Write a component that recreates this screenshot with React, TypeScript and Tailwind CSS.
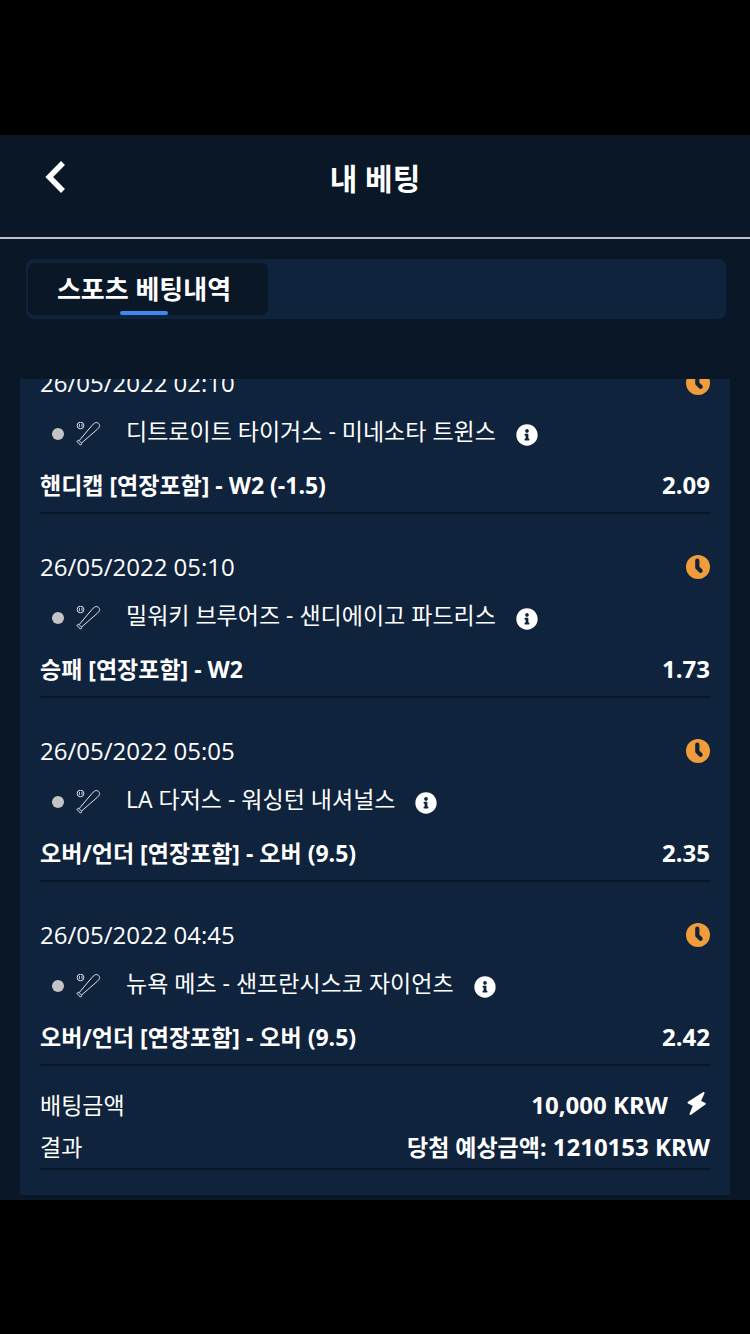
import React from 'react';
import { FaInfoCircle } from 'react-icons/fa';

interface Bet {
  date: string;
  match: string;
  market: string;
  odds: string;
}

const bets: Bet[] = [
  { date: '26/05/2022 02:10', match: '디트로이트 타이거스 - 미네소타 트윈스', market: '핸디캡 [연장포함] - W2 (-1.5)', odds: '2.09' },
  { date: '26/05/2022 05:10', match: '밀워키 브루어즈 - 샌디에이고 파드리스', market: '승패 [연장포함] - W2', odds: '1.73' },
  { date: '26/05/2022 05:05', match: 'LA 다저스 - 워싱턴 내셔널스', market: '오버/언더 [연장포함] - 오버 (9.5)', odds: '2.35' },
  { date: '26/05/2022 04:45', match: '뉴욕 메츠 - 샌프란시스코 자이언츠', market: '오버/언더 [연장포함] - 오버 (9.5)', odds: '2.42' },
];

const ClockIcon = () => (
  <svg className="h-6 w-6" viewBox="0 0 24 24" fill="none" role="img" aria-label="대기중">
    <circle cx="12" cy="12" r="12" fill="#f09c3a" />
    <path d="M11.3 5.500v7l3.300 3.300" stroke="#10233c" strokeWidth="4.2" strokeLinecap="round" strokeLinejoin="round" />
  </svg>
);

const BaseballIcon = () => (
  <svg className="h-6 w-6 text-[#e2e6eb]" viewBox="0 0 24 24" fill="none" stroke="currentColor" aria-hidden="true">
    <circle cx="4.5" cy="3.5" r="3.3" />
    <path d="M3.5 2v3M6 2v3" strokeWidth="0.8" />
    <path d="M3.2 18.6 16.4 3C18.5.6 20.6-.2 22.4 1.300s1.400 3.700-.8 5.700L5.600 21" />
    <path d="m.8 19.300 1.900-1 3.200 3-1.300 1.900z" />
  </svg>
);

const BoltIcon = () => (
  <svg className="h-6 w-6" viewBox="0 0 24 24" fill="currentColor" stroke="currentColor" strokeWidth="2" strokeLinejoin="round" aria-hidden="true">
    <path d="M17.500 2 2.500 11.500 8 14.300 4.500 23 18.800 12.800l-5-2.500z" />
  </svg>
);

const BetItem = ({ bet }: { bet: Bet }) => (
  <li className="shrink-0 border-b-2 border-[#091727] pt-9 pb-2">
    <div className="flex h-[34px] items-center justify-between">
      <time>{bet.date}</time>
      <ClockIcon />
    </div>
    <div className="flex h-[66px] items-center pt-0.5 pl-3">
      <span className="h-3 w-3 rounded-full bg-[#c4c4c6]" />
      <span className="ml-3">
        <BaseballIcon />
      </span>
      <span className="ml-[26px] pb-1.5 text-[23px]">{bet.match}</span>
      <button type="button" aria-label="경기 정보" className="ml-5 pt-0.5">
        <FaInfoCircle className="h-[22px] w-[22px]" />
      </button>
    </div>
    <div className="flex h-[38px] items-center justify-between font-bold">
      <span className="text-[23px]">{bet.market}</span>
      <span>{bet.odds}</span>
    </div>
  </li>
);

export default function App() {
  return (
    <div className="flex h-screen flex-col bg-black pt-[135px] pb-[134px] font-['Open_Sans','Noto_Sans_CJK_KR',sans-serif] text-2xl text-white">
      <div className="flex min-h-0 flex-1 flex-col bg-[#091727]">
        <header className="grid shrink-0 grid-cols-[80px_1fr_80px] border-b-2 border-[#bfc3c6] pt-[22px] pb-9">
          <button type="button" aria-label="뒤로" className="flex items-center pb-1 pl-11">
            <svg className="h-9 w-6" viewBox="0 0 24 36" fill="none" stroke="currentColor" strokeWidth="5.5">
              <path d="M19 4 5.200 18 19 32" />
            </svg>
          </button>
          <h1 className="text-center text-[30px] leading-[44px] font-bold">내 베팅</h1>
        </header>

        <nav className="mt-5 mr-6 mb-[60px] ml-[26px] shrink-0 rounded-lg bg-[#10233c] px-0.5 py-1">
          <button type="button" className="flex h-[52px] w-60 flex-col items-center justify-end rounded-md bg-[#091727] pr-2 text-[26px] leading-[44px] font-bold">
            <span>스포츠 베팅내역</span>
            <span className="h-1 w-12 shrink-0 rounded-full bg-[#3f86f0]" />
          </button>
        </nav>

        <main className="mx-5 mb-[5px] flex min-h-0 flex-1 flex-col justify-end overflow-hidden bg-[#10233c] px-5 pb-[25px]">
          <ul className="flex flex-col">
            {bets.map((bet) => (
              <BetItem key={bet.date} bet={bet} />
            ))}
          </ul>
          <dl className="shrink-0 border-b-2 border-[#091727] pt-[18px]">
            <div className="flex h-[42px] items-center justify-between">
              <dt className="text-[23px]">배팅금액</dt>
              <dd className="flex items-center gap-[18px] font-bold">
                10,000 KRW
                <span className="pb-1">
                  <BoltIcon />
                </span>
              </dd>
            </div>
            <div className="flex h-[42px] items-center justify-between">
              <dt className="text-[23px]">결과</dt>
              <dd className="font-bold">
                <span className="text-[23px]">당첨 예상금액:</span> 1210153 KRW
              </dd>
            </div>
          </dl>
        </main>
      </div>
    </div>
  );
}
